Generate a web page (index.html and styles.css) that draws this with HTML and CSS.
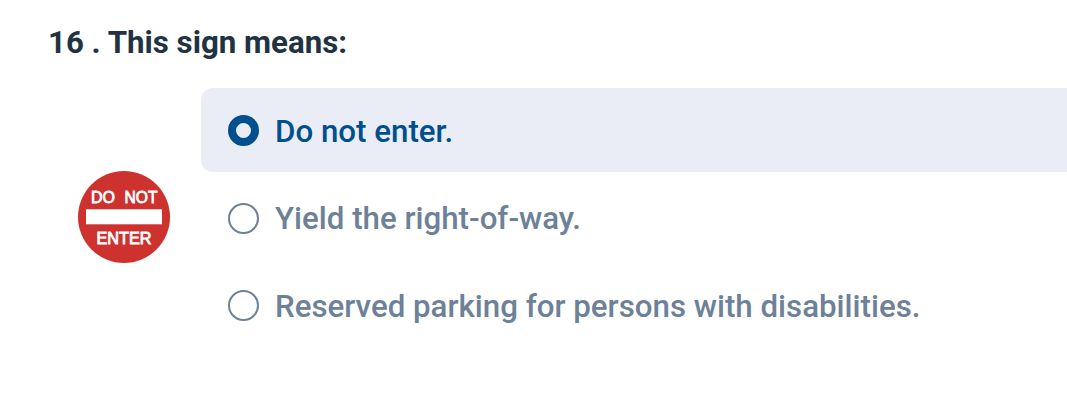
FILE: index.html
```
<!DOCTYPE html>
<html lang="en">

<head>
    <meta charset="UTF-8">
    <meta name="viewport" content="width=device-width, initial-scale=1.0">
    <title>Knowledge Test</title>
    <link rel="stylesheet" href="styles.css">
</head>

<body>

    <section class="question">
        <h2 class="question-title">16 . This sign means:</h2>

        <div class="question-body">
            <div class="sign">
                <svg width="94" height="94" viewBox="0 0 94 94">
                    <circle cx="47" cy="47" r="46" fill="#cd322e" />
                    <rect x="9" y="39.3" width="76" height="15" fill="#fff" />
                    <text class="sign-text" x="14" y="32.6" textLength="24" lengthAdjust="spacingAndGlyphs">DO</text>
                    <text class="sign-text" x="47.5" y="32.6" textLength="33" lengthAdjust="spacingAndGlyphs">NOT</text>
                    <text class="sign-text" x="19.5" y="73.6" textLength="55" lengthAdjust="spacingAndGlyphs">ENTER</text>
                </svg>
            </div>

            <div class="answers">
                <label class="answer selected">
                    <input type="radio" name="q16" checked>
                    <span>Do not enter.</span>
                </label>
                <label class="answer">
                    <input type="radio" name="q16">
                    <span>Yield the right-of-way.</span>
                </label>
                <label class="answer">
                    <input type="radio" name="q16">
                    <span>Reserved parking for persons with disabilities.</span>
                </label>
            </div>
        </div>
    </section>

</body>

</html>
```
FILE: styles.css
```
body {
    font-family: Roboto, "Liberation Sans", sans-serif;
    margin: 0;
    background-color: #fff;
    overflow: hidden;
}

.question {
    padding-top: 25px;
}

.question-title {
    margin: 0 0 27px 48px;
    font-size: 31.25px;
    line-height: 36px;
    font-weight: 700;
    color: #213343;
}

.question-body {
    display: flex;
    align-items: flex-start;
}

.sign {
    width: 123.5px;
    height: 94px;
    padding: 82px 0 0 77px;
}

.sign-text {
    font-family: "Liberation Sans", Arial, sans-serif;
    font-size: 15.8px;
    fill: #fff;
    stroke: #fff;
    stroke-width: 0.8px;
}

.answers {
    flex: 1;
    display: flex;
    flex-direction: column;
    gap: 3.5px;
}

.answer {
    display: flex;
    align-items: center;
    height: 84px;
    padding-left: 27.5px;
    border-radius: 12px 0 0 12px;
    font-size: 31.28px;
    line-height: 36px;
    font-weight: 500;
    color: #6d8198;
}

.answer input {
    appearance: none;
    box-sizing: border-box;
    width: 31px;
    height: 31px;
    margin: 1px 16px 0 0;
    border: 2px solid #6d8198;
    border-radius: 50%;
}

.answer span {
    padding-top: 3px;
}

.answer.selected {
    background-color: #eaedf5;
    color: #00508f;
}

.answer.selected input {
    border-width: 8px;
    border-color: #00508f;
}
```
